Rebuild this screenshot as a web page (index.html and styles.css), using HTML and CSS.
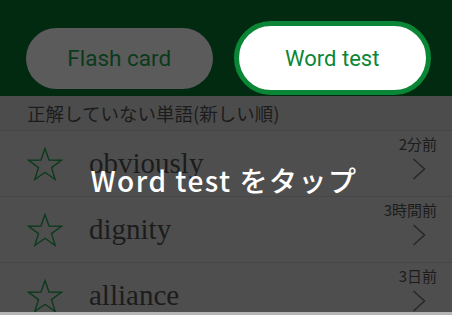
FILE: index.html
```html
<!DOCTYPE html>
<html lang="ja">
<head>
<meta charset="utf-8">
<link rel="stylesheet" href="styles.css">
</head>
<body>
<div class="screen">
  <header class="header">
    <div class="btn btn-flash">Flash card</div>
    <div class="btn btn-test">Word test</div>
  </header>
  <div class="label">正解していない単語(新しい順)</div>
  <ul class="list">
    <li class="row">
      <svg class="star" viewBox="0 0 36 34"><path d="M18 1.5 L22 13 L34.5 13.2 L24.5 20.6 L28.2 32.5 L18 25.3 L7.8 32.5 L11.5 20.6 L1.5 13.2 L14 13 Z"/></svg>
      <span class="word">obviously</span>
      <div class="meta"><span class="time">2分前</span><svg class="chev" viewBox="0 0 14 22"><path d="M1.5 1 L12.5 11 L1.5 21"/></svg></div>
    </li>
    <li class="row">
      <svg class="star" viewBox="0 0 36 34"><path d="M18 1.5 L22 13 L34.5 13.2 L24.5 20.6 L28.2 32.5 L18 25.3 L7.8 32.5 L11.5 20.6 L1.5 13.2 L14 13 Z"/></svg>
      <span class="word">dignity</span>
      <div class="meta"><span class="time">3時間前</span><svg class="chev" viewBox="0 0 14 22"><path d="M1.5 1 L12.5 11 L1.5 21"/></svg></div>
    </li>
    <li class="row">
      <svg class="star" viewBox="0 0 36 34"><path d="M18 1.5 L22 13 L34.5 13.2 L24.5 20.6 L28.2 32.5 L18 25.3 L7.8 32.5 L11.5 20.6 L1.5 13.2 L14 13 Z"/></svg>
      <span class="word">alliance</span>
      <div class="meta"><span class="time">3日前</span><svg class="chev" viewBox="0 0 14 22"><path d="M1.5 1 L12.5 11 L1.5 21"/></svg></div>
    </li>
  </ul>
  <div class="bottom"></div>
  <div class="hint">Word test をタップ</div>
</div>
</body>
</html>
```
FILE: styles.css
```css
* { box-sizing: border-box; }
html, body { margin: 0; padding: 0; background: #4e4e4e; }
.screen {
  position: relative;
  width: 452px;
  height: 315px;
  overflow: hidden;
  background: #4e4e4e;
  font-family: Roboto, "Noto Sans CJK JP", sans-serif;
}
.header {
  height: 96px;
  background: #022a10;
  display: flex;
  align-items: center;
  padding: 20px 21px 0 26px;
  gap: 21px;
}
.btn {
  display: flex;
  align-items: center;
  justify-content: center;
  font-size: 22px;
  border-radius: 40px;
}
.btn-flash {
  width: 187px;
  height: 61px;
  background: #5b5b5b;
  color: #0b3a1b;
  font-size: 22.5px;
}
.btn-test {
  width: 198px;
  height: 74px;
  background: #ffffff;
  border: 5px solid #0a8636;
  color: #0a8636;
}
.label {
  height: 35px;
  padding: 6px 0 0 27px;
  font-family: "Noto Sans CJK JP", sans-serif;
  font-size: 18.5px;
  line-height: 22px;
  color: #1c1c1c;
  background: #4c4c4c;
  border-bottom: 1px solid #464646;
}
.list { list-style: none; margin: 0; padding: 0; }
.row {
  height: 66px;
  display: flex;
  align-items: center;
  padding: 0 15px 0 27px;
  border-bottom: 1px solid #464646;
}
.star { width: 36px; height: 34px; flex: none; }
.star path { fill: none; stroke: #0c3a1c; stroke-width: 1.4; stroke-linejoin: miter; }
.word {
  margin-left: 26px;
  flex: 1;
  font-family: "Liberation Serif", serif;
  font-size: 29px;
  color: #1c1c1c;
}
.meta {
  align-self: stretch;
  display: flex;
  flex-direction: column;
  align-items: flex-end;
  padding-top: 4px;
}
.time {
  font-family: "Noto Sans CJK JP", sans-serif;
  font-size: 15px;
  line-height: 18px;
  color: #1c1c1c;
}
.chev { width: 14px; height: 22px; margin-top: 5px; margin-right: 11px; }
.chev path { fill: none; stroke: #282828; stroke-width: 1.5; }
.bottom {
  position: absolute;
  left: 0; right: 0; bottom: 0;
  height: 3px;
  background: #b4b4b4;
}
.hint {
  position: absolute;
  left: 0; right: 0;
  top: 162px;
  text-align: center;
  padding-right: 4px;
  font-family: "Noto Sans CJK JP", sans-serif;
  font-weight: 500;
  font-size: 28px;
  line-height: 36px;
  letter-spacing: 1.5px;
  color: #ffffff;
}
```
